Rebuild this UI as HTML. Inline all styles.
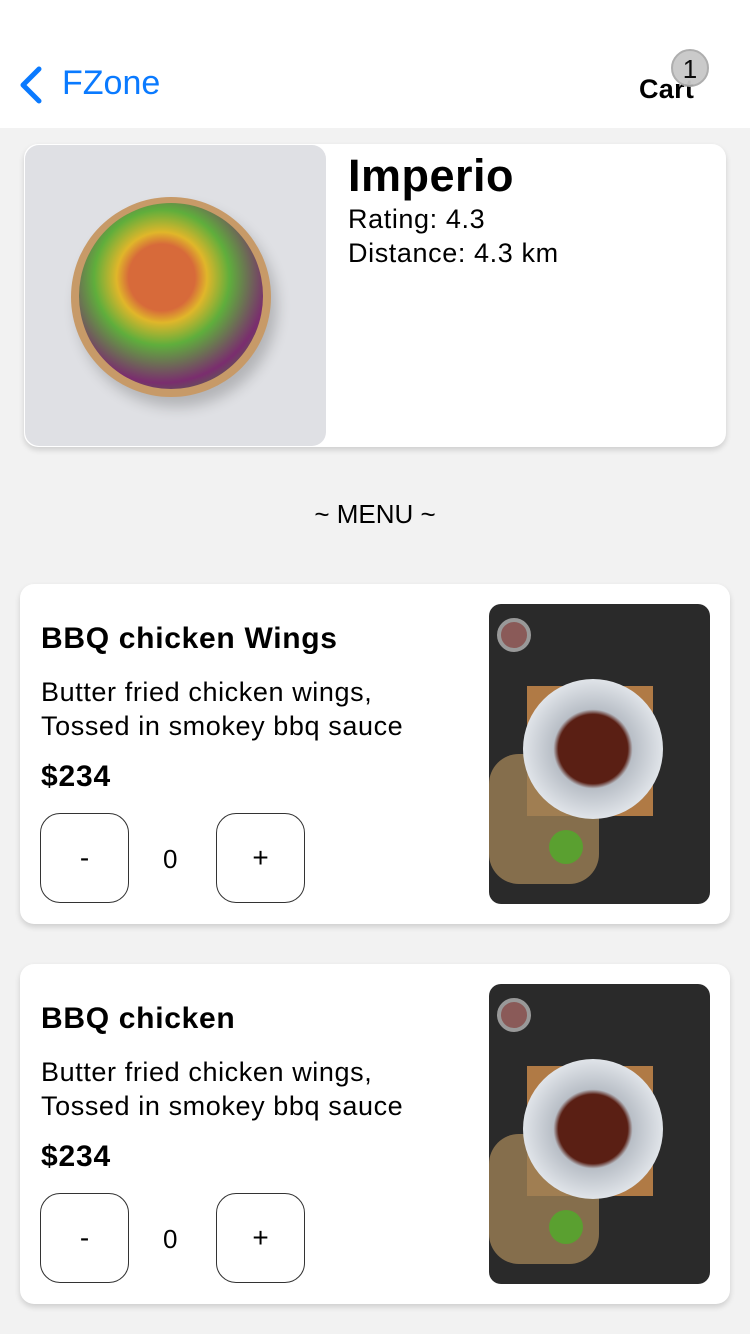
<!DOCTYPE html>
<html><head><meta charset="utf-8"><style>
*{margin:0;padding:0;box-sizing:border-box}
body{width:750px;height:1334px;background:#f2f2f2;font-family:"Liberation Sans",sans-serif;position:relative;overflow:hidden;color:#000}
.hdr{position:absolute;left:0;top:0;width:750px;height:128px;background:#fff}
.back{position:absolute;left:62px;top:64px;font-size:34px;color:#0a7aff}
.cart{position:absolute;left:639px;top:74px;font-size:27px;font-weight:bold;letter-spacing:.3px}
.badge{position:absolute;left:671px;top:49px;width:38px;height:38px;border-radius:50%;background:#c8c8c8;border:2px solid #aaa;font-size:26px;text-align:center;line-height:36px;opacity:.95}
.rest{position:absolute;left:24px;top:144px;width:702px;height:303px;background:#fff;border-radius:14px;box-shadow:0 3px 6px rgba(0,0,0,.15)}
.salad{position:absolute;left:1px;top:1px;width:301px;height:301px;border-radius:14px;background:#dfe0e4;overflow:hidden}
.card{position:absolute;left:20px;width:710px;height:340px;background:#fff;border-radius:14px;box-shadow:0 3px 6px rgba(0,0,0,.15)}
.card h2{position:absolute;left:21px;top:38px;font-size:30px;letter-spacing:.7px}
.card .d{position:absolute;left:21px;top:91px;font-size:27px;line-height:34px;letter-spacing:.6px}
.card .p{position:absolute;left:21px;top:176px;font-size:30px;font-weight:bold;letter-spacing:.8px}
.btn{position:absolute;top:229px;width:89px;height:90px;border:1px solid #333;border-radius:20px;font-size:28px;text-align:center;line-height:88px}
.q{position:absolute;left:143px;top:260px;font-size:26px}
.bbq{position:absolute;left:469px;top:20px;width:221px;height:300px;border-radius:12px;background:#2a2a2a;overflow:hidden}
</style></head><body>
<div class="hdr">
<svg style="position:absolute;left:18px;top:66px" width="26" height="38" viewBox="0 0 26 38"><path d="M21 3 L5 19 L21 35" stroke="#0a7aff" stroke-width="5" fill="none" stroke-linecap="round" stroke-linejoin="round"/></svg>
<div class="back">FZone</div>
<div class="cart">Cart</div><div class="badge">1</div>
</div>
<div class="rest">
<div class="salad">
<div style="position:absolute;left:46px;top:52px;width:200px;height:200px;border-radius:50%;background:#c79a68;box-shadow:6px 10px 14px rgba(0,0,0,.2)"></div>
<div style="position:absolute;left:54px;top:58px;width:184px;height:186px;border-radius:50%;background:radial-gradient(circle at 45% 40%,#d76a3a 0 22%,#e0b62a 30%,#5fae3c 45%,#7a2d6e 70%,#3f8f36 90%)"></div>
</div>
<div style="position:absolute;left:324px;top:6px;font-size:45px;font-weight:bold;letter-spacing:.5px">Imperio</div>
<div style="position:absolute;left:324px;top:58px;font-size:27px;line-height:34px;letter-spacing:.6px">Rating: 4.3<br>Distance: 4.3 km</div>
</div>
<div style="position:absolute;left:0;width:750px;top:499px;text-align:center;font-size:26px">~ MENU ~</div>

<div class="card" style="top:584px">
<h2>BBQ chicken Wings</h2>
<div class="d">Butter fried chicken wings,<br>Tossed in smokey bbq sauce</div>
<div class="p">$234</div>
<div class="btn" style="left:20px">-</div><div class="q">0</div><div class="btn" style="left:196px">+</div>
<div class="bbq"><div style="position:absolute;left:38px;top:82px;width:126px;height:130px;background:#b07a45"></div><div style="position:absolute;left:0;top:150px;width:110px;height:130px;background:#9c7f55;opacity:.8;border-radius:30px"></div><div style="position:absolute;left:34px;top:75px;width:140px;height:140px;border-radius:50%;background:radial-gradient(circle,#5a1f14 0 35%,#b8bec6 40%,#dfe3e8 70%)"></div><div style="position:absolute;left:8px;top:14px;width:34px;height:34px;border-radius:50%;background:#8a5a58;border:4px solid #999"></div><div style="position:absolute;left:60px;top:226px;width:34px;height:34px;border-radius:50%;background:#5aa030"></div></div>
</div>

<div class="card" style="top:964px">
<h2>BBQ chicken</h2>
<div class="d">Butter fried chicken wings,<br>Tossed in smokey bbq sauce</div>
<div class="p">$234</div>
<div class="btn" style="left:20px">-</div><div class="q">0</div><div class="btn" style="left:196px">+</div>
<div class="bbq"><div style="position:absolute;left:38px;top:82px;width:126px;height:130px;background:#b07a45"></div><div style="position:absolute;left:0;top:150px;width:110px;height:130px;background:#9c7f55;opacity:.8;border-radius:30px"></div><div style="position:absolute;left:34px;top:75px;width:140px;height:140px;border-radius:50%;background:radial-gradient(circle,#5a1f14 0 35%,#b8bec6 40%,#dfe3e8 70%)"></div><div style="position:absolute;left:8px;top:14px;width:34px;height:34px;border-radius:50%;background:#8a5a58;border:4px solid #999"></div><div style="position:absolute;left:60px;top:226px;width:34px;height:34px;border-radius:50%;background:#5aa030"></div></div>
</div>
</body></html>
